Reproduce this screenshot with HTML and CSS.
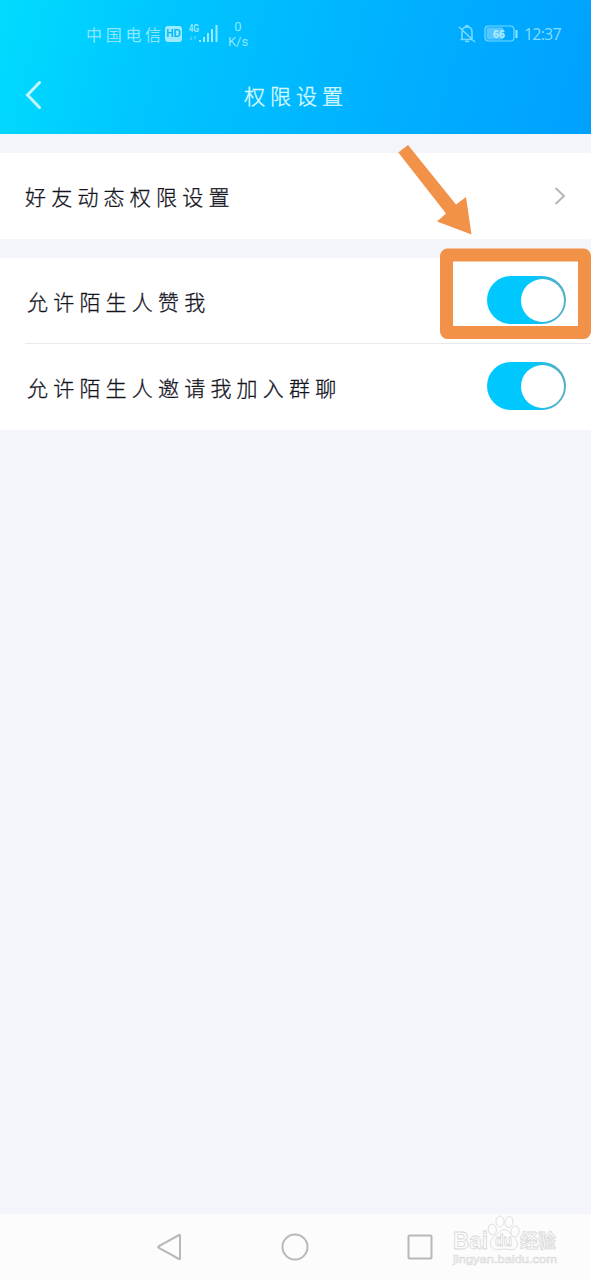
FILE: index.html
```html
<!DOCTYPE html>
<html lang="zh-CN">
<head>
<meta charset="utf-8">
<title>权限设置</title>
<link rel="stylesheet" href="styles.css">
</head>
<body>
<div class="screen">
  <header class="header">
    <div class="status">
      <span class="carrier">中国电信</span>
      <span class="hd">HD</span>
      <svg class="signal" width="30" height="22" viewBox="0 0 30 22">
        <text class="net" x="0" y="9" textLength="10" lengthAdjust="spacingAndGlyphs">4G</text>
        <path class="faint" d="M2 13v4M1 15l1 2 1-2M6 17v-4M5 15l1-2 1 2"/>
        <path class="bars" d="M11 19v-2M15 19v-5M19 19V10M23 19V6M27.500 19V2"/>
      </svg>
      <span class="speed"><span>0</span><span>K/s</span></span>
      <span class="spacer"></span>
      <svg class="bell" width="18" height="20" viewBox="0 0 18 20">
        <path d="M2.500 15.500h12.500M4 15V8q0-5 5-5t5 5v7M7.500 2.500Q9 .5 10.500 2.500M7 17.500h4M1 3l16 15"/>
      </svg>
      <svg class="battery" width="35" height="18" viewBox="0 0 35 18">
        <rect class="level" x="2.500" y="2.500" width="17" height="12" rx="2"/>
        <rect class="shell" x="1" y="1" width="29" height="15" rx="3.500"/>
        <path class="tip" d="M32.500 5v8"/>
        <text x="9" y="13" textLength="12" lengthAdjust="spacingAndGlyphs">66</text>
      </svg>
      <span class="time">12:37</span>
    </div>
    <div class="titlebar">
      <svg class="back" width="18" height="30" viewBox="0 0 18 30"><path d="M14.500 2.500 2.500 15l12 12.500"/></svg>
      <h1 class="title">权限设置</h1>
    </div>
  </header>
  <main class="content">
    <section class="group">
      <div class="row">
        <span class="label">好友动态权限设置</span>
        <svg class="chevron" width="12" height="20" viewBox="0 0 12 20"><path d="M1.500 2 10 10l-8.500 8"/></svg>
      </div>
    </section>
    <section class="group">
      <div class="row lined">
        <span class="label indent">允许陌生人赞我</span>
        <span class="toggle"><span class="knob"></span></span>
      </div>
      <div class="row">
        <span class="label indent">允许陌生人邀请我加入群聊</span>
        <span class="toggle"><span class="knob"></span></span>
      </div>
    </section>
  </main>
  <nav class="navbar">
    <svg width="26" height="30" viewBox="0 0 26 30"><path d="M24 3.500v23q0 1-1 .5L3 16q-1.500-1 0-2l20-11q1-.5 1 .5z"/></svg>
    <svg width="30" height="30" viewBox="0 0 30 30"><circle cx="15" cy="15" r="12.500"/></svg>
    <svg width="26" height="26" viewBox="0 0 26 26"><rect x="1.500" y="1.500" width="23" height="23" rx="1"/></svg>
  </nav>
  <svg class="watermark" width="112" height="54" viewBox="0 0 112 54">
    <text class="brand" x="2" y="35" textLength="35" lengthAdjust="spacingAndGlyphs">Bai</text>
    <g class="paw">
      <ellipse cx="41.300" cy="15.500" rx="4" ry="5.500" transform="rotate(-12 41.300 15.500)"/>
      <ellipse cx="49" cy="7.500" rx="4" ry="5.500"/>
      <ellipse cx="58" cy="8" rx="4" ry="5.500" transform="rotate(8 58 8)"/>
      <ellipse cx="64" cy="17.500" rx="4" ry="5.500" transform="rotate(12 64 17.500)"/>
      <path d="M53 15.500q4 0 7 5 2 2 4 4 4 4 2 8-2 4-8 3-5-1-10 0-6 1-8-3-2-5 2-9 3-2 5-4 3-4 6-4z"/>
    </g>
    <text class="du" x="44" y="32" textLength="17" lengthAdjust="spacingAndGlyphs">du</text>
    <text class="cn" x="69" y="33.500" textLength="36" lengthAdjust="spacingAndGlyphs">经验</text>
    <text class="url" x="2" y="48.500" textLength="104" lengthAdjust="spacingAndGlyphs">jingyan.baidu.com</text>
  </svg>
  <svg class="callout" width="191" height="204" viewBox="0 0 191 204">
    <path class="arrow" d="M-1.700 17.500 8 10 56 69.500 66 62 71.500 99.500 37 86.500l9-8z"/>
    <rect class="frame" x="46.500" y="120" width="138" height="77.500" rx="1"/>
  </svg>
</div>
</body>
</html>
```
FILE: styles.css
```css
* { box-sizing: border-box; }
body { margin: 0; font-family: "Noto Sans CJK SC", "Liberation Sans", sans-serif; }
.screen { position: relative; display: flex; flex-direction: column; width: 591px; height: 1280px; overflow: hidden; background: #f4f5fa; }
svg { flex: none; overflow: visible; fill: none; }

.header { height: 134px; flex: none; background: linear-gradient(105deg, #00dcff 0%, #00c5ff 28%, #00b2ff 62%, #00a0ff 100%); color: #c4f5ff; }
.status { display: flex; align-items: center; height: 68px; padding: 0 28px 0 86px; color: #8ee7ff; }
.carrier { width: 79px; font-size: 16px; font-weight: 400; letter-spacing: 3.700px; white-space: nowrap; }
.hd { width: 17px; height: 16px; border-radius: 3px; background: #9aebff; color: #00b8f4; font: bold 10px/16px "Liberation Sans", sans-serif; text-align: center; }
.signal { margin-left: 7px; }
.net { fill: #9aebff; font: bold 10px "Liberation Sans", sans-serif; }
.faint { stroke: #4bd2ff; stroke-width: 1; }
.bars { stroke: #9aebff; stroke-width: 2; }
.speed { display: flex; flex-direction: column; align-items: center; width: 22px; margin-left: 8px; font: 13px/15px Roboto, sans-serif; }
.spacer { flex: 1; }
.bell { margin-right: 8px; stroke: #76d9ff; stroke-width: 1.600; }
.shell { stroke: #76d9ff; stroke-width: 1.200; }
.level { fill: #55c6ff; }
.tip { stroke: #8ee7ff; stroke-width: 2; }
.battery text { fill: #b4edff; font: bold 11px "Liberation Sans", sans-serif; }
.time { width: 39px; margin-left: 5px; color: #87dbff; font: 16px/20px "Open Sans", sans-serif; letter-spacing: -0.800px; white-space: nowrap; }
.titlebar { display: flex; align-items: center; height: 54px; padding-left: 25px; }
.back { stroke: #c4f5ff; stroke-width: 3; stroke-linecap: round; }
.title { margin: 0 0 0 201px; font-size: 21px; line-height: 30px; font-weight: 300; letter-spacing: 5px; color: #d6f8ff; -webkit-text-stroke: 0.400px #d6f8ff; }

.content { display: flex; flex: 1; flex-direction: column; gap: 19px; padding-top: 19px; }
.group { background: #fff; }
.row { display: flex; align-items: center; justify-content: space-between; height: 86px; padding: 0 25px 1px; }
.lined { background: linear-gradient(#e9eaed, #e9eaed) 25px 100% / 100% 1px no-repeat; }
.label { color: #15151f; font-size: 21px; font-weight: 300; line-height: 32px; letter-spacing: 5.200px; white-space: nowrap; -webkit-text-stroke: 0.300px #15151f; }
.indent { padding-left: 2px; }
.chevron { stroke: #b5b5b8; stroke-width: 2; }
.toggle { display: flex; justify-content: flex-end; align-items: center; width: 79px; height: 48px; margin-bottom: 1px; padding-right: 2px; border-radius: 24px; background: linear-gradient(90deg, #00c8ff 55%, #4fb0c8 90%); }
.knob { width: 43px; height: 43px; border-radius: 50%; background: #fff; }

.navbar { display: flex; align-items: center; justify-content: space-between; height: 66px; flex: none; padding: 0 158px 0 156px; background: #fcfcfc; stroke: #b8b8b8; stroke-width: 2; }

.watermark { position: absolute; left: 451px; top: 1214px; stroke: #d8d8d8; stroke-width: .8; fill: #fcfcfc; }
.brand { font: bold 23px "Liberation Sans", sans-serif; }
.du { font: bold 16px "Liberation Sans", sans-serif; }
.cn { font: bold 19px/1 "Noto Sans CJK SC", sans-serif; }
.url { font: 10px "Liberation Sans", sans-serif; stroke-width: .5; }
.callout { position: absolute; left: 400px; top: 135px; }
.arrow { fill: #f29248; }
.frame { stroke: #f29248; stroke-width: 13; stroke-linejoin: round; }
```
